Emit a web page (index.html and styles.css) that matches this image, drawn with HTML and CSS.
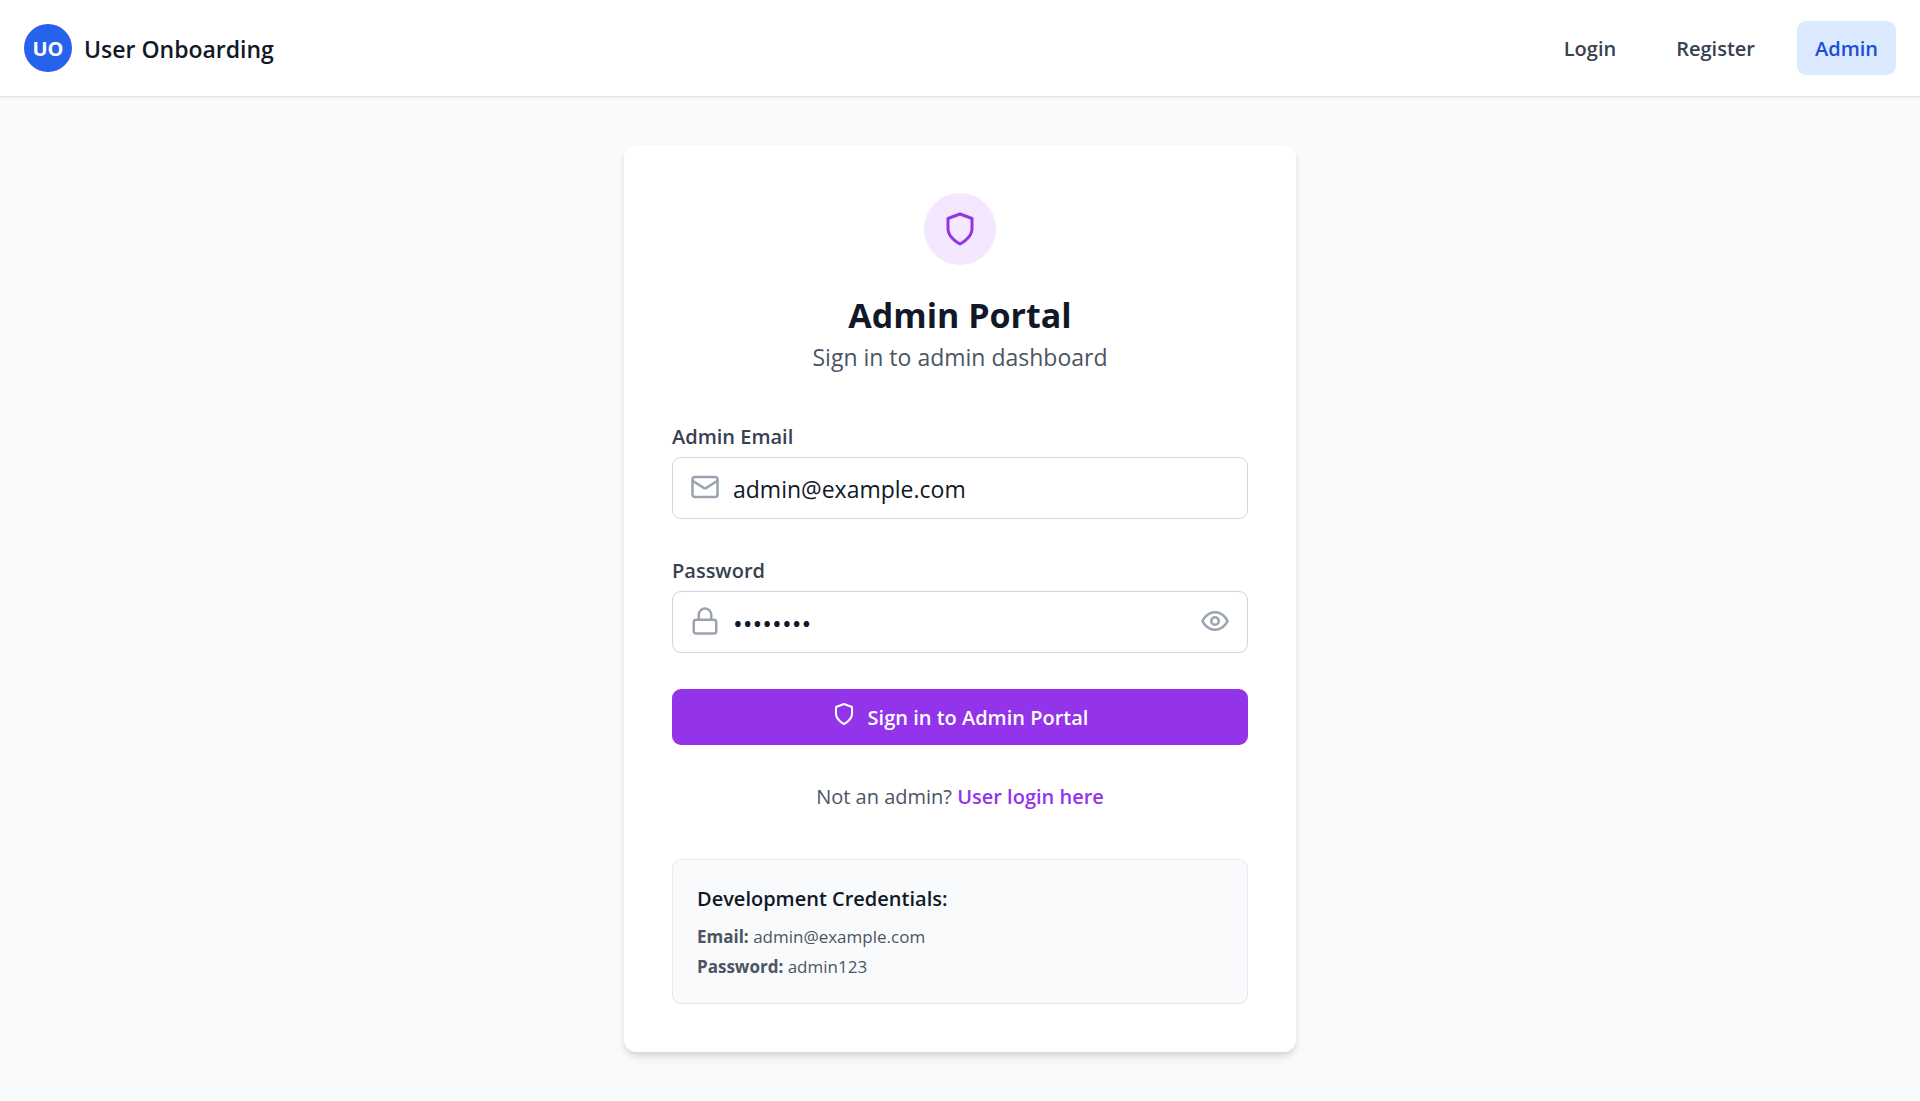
FILE: index.html
```html
<!DOCTYPE html>
<html lang="en">
<head>
<meta charset="utf-8">
<meta name="viewport" content="width=device-width, initial-scale=1">
<title>Admin Portal - User Onboarding</title>
<link rel="stylesheet" href="styles.css">
</head>
<body>
<div class="page">
  <header class="topbar">
    <a class="brand" href="#">
      <span class="brand-mark">UO</span>
      <span class="brand-name">User Onboarding</span>
    </a>
    <nav class="nav">
      <a class="nav-link" href="#login">Login</a>
      <a class="nav-link" href="#register">Register</a>
      <a class="nav-link nav-link-active" href="#admin" aria-current="page">Admin</a>
    </nav>
  </header>
  <main class="main">
    <section class="card">
      <div class="card-head">
        <div class="badge">
          <svg class="icon badge-icon" viewBox="0 0 24 24" aria-hidden="true"><path d="M12 22s8-4 8-10V5l-8-3-8 3v7c0 6 8 10 8 10z"/></svg>
        </div>
        <h1 class="title">Admin Portal</h1>
        <p class="subtitle">Sign in to admin dashboard</p>
      </div>
      <form class="form">
        <div class="field">
          <label class="label" for="email">Admin Email</label>
          <div class="control">
            <svg class="icon control-icon" viewBox="0 0 24 24" aria-hidden="true"><rect x="2" y="4" width="20" height="16" rx="2"/><path d="m22 7-8.97 5.7a1.94 1.94 0 0 1-2.06 0L2 7"/></svg>
            <input class="input" id="email" type="email" value="admin@example.com">
          </div>
        </div>
        <div class="field">
          <label class="label" for="password">Password</label>
          <div class="control">
            <svg class="icon control-icon" viewBox="0 0 24 24" aria-hidden="true"><rect x="3" y="11" width="18" height="11" rx="2"/><path d="M7 11V7a5 5 0 0 1 10 0v4"/></svg>
            <input class="input input-password" id="password" type="password" value="admin123">
            <button class="reveal" type="button" aria-label="Show password">
              <svg class="icon control-icon" viewBox="0 0 24 24" aria-hidden="true"><path d="M2 12s3-7 10-7 10 7 10 7-3 7-10 7-10-7-10-7Z"/><circle cx="12" cy="12" r="3"/></svg>
            </button>
          </div>
        </div>
        <button class="submit" type="submit">
          <svg class="icon submit-icon" viewBox="0 0 24 24" aria-hidden="true"><path d="M12 22s8-4 8-10V5l-8-3-8 3v7c0 6 8 10 8 10z"/></svg>
          <span>Sign in to Admin Portal</span>
        </button>
      </form>
      <p class="switch">Not an admin? <a class="switch-link" href="#login">User login here</a></p>
      <aside class="creds">
        <h2 class="creds-title">Development Credentials:</h2>
        <p class="creds-line"><strong>Email:</strong> admin@example.com</p>
        <p class="creds-line"><strong>Password:</strong> admin123</p>
      </aside>
    </section>
  </main>
</div>
</body>
</html>
```
FILE: styles.css
```css
*,
*::before,
*::after {
  box-sizing: border-box;
}

body {
  margin: 0;
  background: #fff;
  color: #111827;
  font-family: "Segoe UI", "Open Sans", "Noto Sans", sans-serif;
  font-size: 20px;
  line-height: 30px;
}

h1,
h2,
p {
  margin: 0;
}

a {
  color: inherit;
  text-decoration: none;
}

button,
input {
  font: inherit;
}

.page {
  background: #f9fafb;
}

.icon {
  display: block;
  flex: none;
  fill: none;
  stroke: currentColor;
  stroke-width: 2;
  stroke-linecap: round;
  stroke-linejoin: round;
}

.topbar {
  position: relative;
  display: flex;
  align-items: center;
  justify-content: space-between;
  padding: 21px 24px;
  background: #fff;
  box-shadow: 0 1px 3px rgba(0, 0, 0, 0.1), 0 1px 2px -1px rgba(0, 0, 0, 0.1);
}

.brand {
  display: flex;
  align-items: center;
  gap: 12px;
}

.brand-mark {
  display: grid;
  place-items: center;
  width: 48px;
  height: 48px;
  padding-top: 2px;
  border-radius: 50%;
  background: #2563eb;
  color: #fff;
  font-weight: 700;
}

.brand-name {
  padding-top: 2px;
  font-size: 23px;
  font-weight: 600;
}

.nav {
  display: flex;
  gap: 24px;
}

.nav-link {
  padding: 13px 18px 11px;
  border-radius: 9px;
  color: #374151;
  font-weight: 600;
}

.nav-link-active {
  background: #dbeafe;
  color: #1d4ed8;
}

.main {
  display: flex;
  justify-content: center;
  padding: 49px 24px 48px;
}

.card {
  width: 100%;
  max-width: 672px;
  padding: 48px;
  border-radius: 12px;
  background: #fff;
  box-shadow: 0 6px 9px -1px rgba(0, 0, 0, 0.1), 0 3px 6px -2px rgba(0, 0, 0, 0.1);
}

.card-head {
  display: flex;
  flex-direction: column;
  align-items: center;
  margin-bottom: 46px;
  text-align: center;
}

.badge {
  display: grid;
  place-items: center;
  width: 72px;
  height: 72px;
  margin-bottom: 26px;
  border-radius: 50%;
  background: #f3e8ff;
  color: #9333ea;
}

.badge-icon {
  width: 36px;
  height: 36px;
}

.title {
  font-size: 34px;
  font-weight: 700;
  line-height: 48px;
}

.subtitle {
  color: #4b5563;
  font-size: 23px;
  line-height: 36px;
}

.form {
  display: flex;
  flex-direction: column;
  gap: 36px;
}

.label {
  display: block;
  margin-bottom: 4px;
  color: #374151;
  font-weight: 600;
  line-height: 32px;
}

.control {
  display: flex;
  align-items: center;
  gap: 12px;
  height: 62px;
  padding: 0 17px 2px;
  border: 1px solid #d1d5db;
  border-radius: 9px;
  background: #fff;
  color: #9ca3af;
}

.control-icon {
  width: 30px;
  height: 30px;
}

.input {
  flex: 1;
  min-width: 0;
  padding: 4px 0 0 1px;
  border: 0;
  outline: 0;
  background: transparent;
  color: #111827;
  font-size: 23px;
}

.input-password {
  font-size: 26px;
}

.reveal {
  padding: 0;
  border: 0;
  background: none;
  color: inherit;
  cursor: pointer;
}

.submit {
  display: flex;
  align-items: center;
  justify-content: center;
  gap: 12px;
  padding: 13px 24px 11px;
  border: 0;
  border-radius: 9px;
  background: #9333ea;
  color: #fff;
  font-weight: 600;
  cursor: pointer;
}

.submit-icon {
  width: 24px;
  height: 24px;
  margin-bottom: 8px;
}

.switch {
  margin: 37px 0 47px;
  color: #4b5563;
  text-align: center;
}

.switch-link {
  color: #9333ea;
  font-weight: 600;
}

.creds {
  padding: 24px 24px 21px;
  border: 1px solid #e5e7eb;
  border-radius: 9px;
  background: #f9fafb;
}

.creds-title {
  margin-bottom: 8px;
  font-size: 20px;
  font-weight: 600;
}

.creds-line {
  color: #4b5563;
  font-size: 17px;
}
```
